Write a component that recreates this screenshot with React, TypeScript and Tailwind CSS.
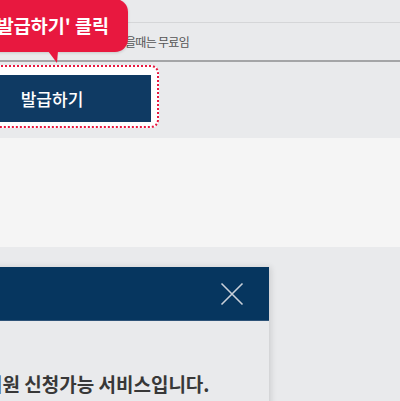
export default function App() {
  return (
    <div
      className="relative w-[400px] h-[401px] overflow-hidden bg-[#e9eaec]"
      style={{ fontFamily: '"Noto Sans CJK KR", "Noto Sans", sans-serif' }}
    >
      {/* top rows */}
      <div className="h-[23px] border-b border-[#d5d6d8]" />
      <div className="h-[39px] border-b-2 border-[#a4a5a7] flex items-center pl-[94px]">
        <span className="text-[12px] tracking-[-0.7px] text-[#555]">발급받을때는 무료임</span>
      </div>

      {/* issue button in dotted frame */}
      <div className="mt-[3px] -ml-[55px] w-[214px] h-[63px] rounded-[8px] border-2 border-dotted border-[#e8183f] bg-white pt-[8px] pr-[6px] pb-[4px] pl-[6px] flex">
        <button className="flex-1 bg-[#0f3a63] text-white text-[17px] font-medium flex items-center justify-center">
          발급하기
        </button>
      </div>

      {/* light panel */}
      <div className="mt-[10px] h-[109px] bg-[#f5f5f5]" />

      {/* modal */}
      <div className="mt-[20px] -ml-[70px] w-[339px] shadow-[2px_0_6px_rgba(0,0,0,0.12)]">
        <div className="h-[54px] bg-[#06365f] border-b border-[#2e5378] flex items-center justify-end pr-[25px]">
          <svg width="24" height="24" viewBox="0 0 24 24">
            <path d="M1.5 1.5 L22.5 22.5 M22.5 1.5 L1.5 22.5" stroke="#c9d0d9" strokeWidth="1.6" fill="none" />
          </svg>
        </div>
        <div className="bg-[#e9eaec] pl-[20px] pt-[50px] h-[100px]">
          <p className="text-[19px] font-bold text-[#383838] leading-[26px] tracking-[0px] whitespace-nowrap">
            개인회원 신청가능 서비스입니다.
          </p>
        </div>
      </div>

      {/* tooltip */}
      <div className="absolute top-[-1px] left-[-40px] w-[168px] h-[53px] rounded-[13px] bg-[#e8183f] flex items-center justify-end pr-[19px] shadow-[0_1px_3px_rgba(0,0,0,0.15)]">
        <span className="text-[18.5px] font-bold text-white whitespace-nowrap">'발급하기' 클릭</span>
      </div>
      <svg className="absolute left-[48px] top-[51px]" width="10" height="12" viewBox="0 0 10 12">
        <polygon points="0,0 10,0 9,12" fill="#e8183f" />
      </svg>
    </div>
  );
}
